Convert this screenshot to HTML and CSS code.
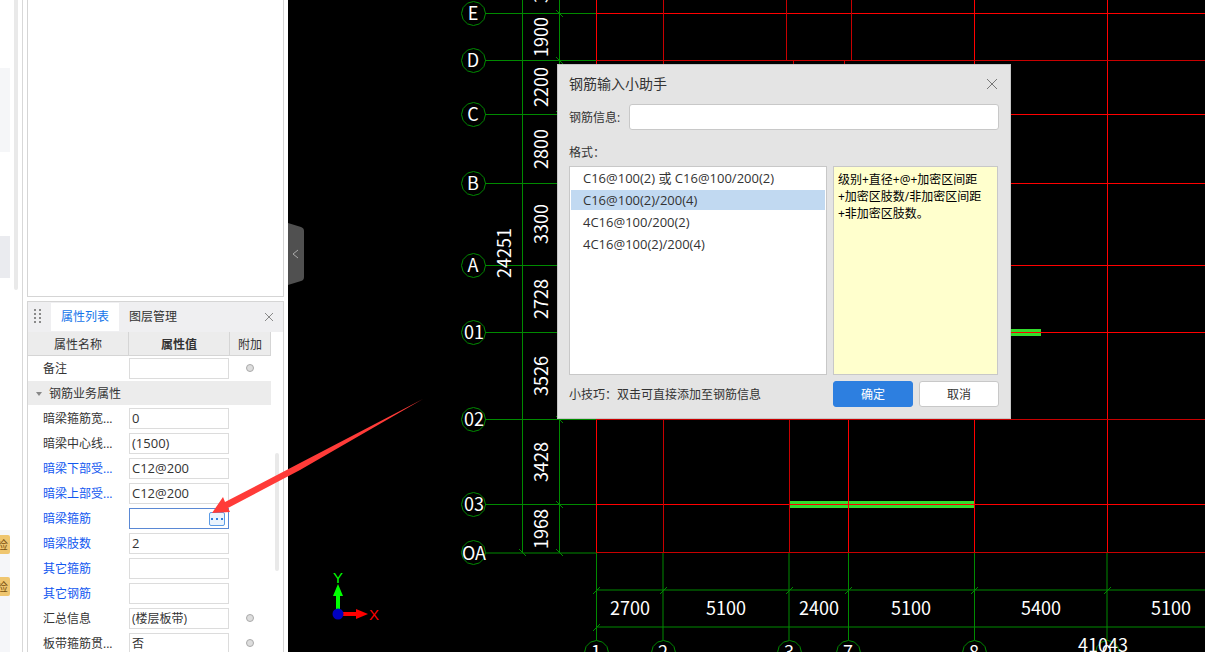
FILE: index.html
```html
<!DOCTYPE html>
<html lang="zh-CN">
<head>
<meta charset="utf-8">
<title>钢筋输入小助手</title>
<link rel="stylesheet" href="styles.css">
</head>
<body>
<div class="app">
  <aside class="rail">
    <div class="rail-list">
      <div class="rail-block"></div>
      <div class="rail-block rail-block-active"></div>
      <div class="rail-tags"><span class="tag">检</span><span class="tag">检</span></div>
    </div>
    <div class="rail-scroll"></div>
  </aside>

  <div class="side">
    <section class="tree-panel" aria-label="构件列表"></section>
    <section class="props">
      <header class="tabs">
        <svg class="grip" width="8" height="16" viewBox="0 0 8 16"><path d="M0 1h2M5 1h2M0 5h2M5 5h2M0 9h2M5 9h2M0 13h2M5 13h2" stroke="#8a8a8a" stroke-width="2"/></svg>
        <button class="tab tab-active" type="button">属性列表</button>
        <button class="tab" type="button">图层管理</button>
        <button class="icon-btn tabs-close" type="button" aria-label="关闭"><svg width="10" height="10" viewBox="0 0 10 10"><path d="M1 1l8 8M9 1l-8 8" stroke="#888" fill="none"/></svg></button>
      </header>
      <div class="props-body">
        <table class="prop-table">
          <colgroup><col class="col-name"><col class="col-value"><col class="col-extra"></colgroup>
          <thead><tr><th>属性名称</th><th class="strong">属性值</th><th>附加</th></tr></thead>
          <tbody>
            <tr><td><label for="p0">备注</label></td><td><div class="field"><input id="p0" type="text"></div></td><td class="extra"><input type="checkbox" aria-label="附加备注"></td></tr>
            <tr class="group"><td colspan="3"><span class="group-title"><svg width="6" height="4" viewBox="0 0 6 4"><path d="M0 0h6L3 4z" fill="#888"/></svg>钢筋业务属性</span></td></tr>
            <tr><td><label for="p1">暗梁箍筋宽...</label></td><td><div class="field"><input id="p1" type="text" value="0"></div></td><td></td></tr>
            <tr><td><label for="p2">暗梁中心线...</label></td><td><div class="field"><input id="p2" type="text" value="(1500)"></div></td><td></td></tr>
            <tr class="key"><td><label for="p3">暗梁下部受...</label></td><td><div class="field"><input id="p3" type="text" value="C12@200"></div></td><td></td></tr>
            <tr class="key"><td><label for="p4">暗梁上部受...</label></td><td><div class="field"><input id="p4" type="text" value="C12@200"></div></td><td></td></tr>
            <tr class="key"><td><label for="p5">暗梁箍筋</label></td><td><div class="field field-active"><input id="p5" type="text"><button class="more" type="button" aria-label="更多"><svg width="12" height="2" viewBox="0 0 12 2"><path d="M0 1h2M5 1h2M10 1h2" stroke="#2d7fe0" stroke-width="2"/></svg></button></div></td><td></td></tr>
            <tr class="key"><td><label for="p6">暗梁肢数</label></td><td><div class="field"><input id="p6" type="text" value="2"></div></td><td></td></tr>
            <tr class="key"><td><label for="p7">其它箍筋</label></td><td><div class="field"><input id="p7" type="text"></div></td><td></td></tr>
            <tr class="key"><td><label for="p8">其它钢筋</label></td><td><div class="field"><input id="p8" type="text"></div></td><td></td></tr>
            <tr><td><label for="p9">汇总信息</label></td><td><div class="field"><input id="p9" class="cjk" type="text" value="(楼层板带)"></div></td><td class="extra"><input type="checkbox" aria-label="附加汇总信息"></td></tr>
            <tr><td><label for="p10">板带箍筋贯...</label></td><td><div class="field"><input id="p10" class="cjk" type="text" value="否"></div></td><td class="extra"><input type="checkbox" aria-label="附加板带箍筋"></td></tr>
          </tbody>
        </table>
        <div class="props-scroll"></div>
      </div>
    </section>
  </div>

  <main class="canvas">
    <svg class="drawing" width="1632" height="900" viewBox="288 0 1632 900">
      <defs><polygon id="bubble" points="12,0 10.4,6 6,10.4 0,12 -6,10.4 -10.4,6 -12,0 -10.4,-6 -6,-10.4 0,-12 6,-10.4 10.4,-6"/></defs>
      <g fill="#33dd2c"><rect x="960" y="329" width="81" height="7"/><rect x="789" y="501" width="185" height="7"/></g>
      <g class="axis-green">
        <path d="M485 13.5H596M485 60.5H596M485 114.5H596M485 183.5H596M485 265.5H596M485 332.5H596M485 419.5H596M485 504.5H596M485 553H596"/>
        <path d="M522.5 0V553M559.5 0V553"/>
        <path d="M596.5 553V640M663 553V640M789 553V640M848.5 553V640M974.5 553V640M1107 553V640M596 590H1920M596 627H1920"/>
        <path d="M556 10l7 7M556 57l7 7M556 111l7 7M556 416l7 7M556 501l7 7M556 549l7 7M519 549l7 7M593 594l7-7M660 594l7-7M786 594l7-7M845 594l7-7M971 594l7-7M1104 594l7-7M593 631l7-7"/>
        <use href="#bubble" x="473.5" y="13.5"/><use href="#bubble" x="473.5" y="60.5"/><use href="#bubble" x="473.5" y="114.5"/><use href="#bubble" x="473.5" y="183.5"/><use href="#bubble" x="473.5" y="265.5"/><use href="#bubble" x="473.5" y="332.5"/><use href="#bubble" x="473.5" y="419.5"/><use href="#bubble" x="473.5" y="504.5"/><use href="#bubble" x="473.5" y="552.5"/>
        <use href="#bubble" x="596.5" y="652.5"/><use href="#bubble" x="663.5" y="652.5"/><use href="#bubble" x="789.5" y="652.5"/><use href="#bubble" x="848.5" y="652.5"/><use href="#bubble" x="974.5" y="652.5"/><use href="#bubble" x="1107.5" y="652.5"/>
      </g>
      <g class="axis-red">
        <path d="M596 13.5H1920M596 114.5H1920M596 183.5H1920M596 265.5H1920M596 332.5H1920M596 504.5H1920"/>
        <path d="M596.5 0V553M848.5 300V553M974.5 0V553M1107.5 0V553"/>
        <path class="dim" d="M596 60.5H1920M596 419.5H1920M596 552.5H1920M663.5 0V553M786.5 0V60M793.5 60V90M851.5 0V60M844.5 60V90M789.5 300V553"/>
      </g>
      <g class="cad-text">
        <text x="473" y="20">E</text><text x="473" y="67">D</text><text x="473" y="121">C</text><text x="473" y="190">B</text><text x="473" y="272">A</text><text x="474" y="339">01</text><text x="474" y="426">02</text><text x="474" y="511">03</text><text x="474" y="560">OA</text>
        <text transform="translate(548 -17) rotate(-90)">3002</text>
        <text transform="translate(548 37) rotate(-90)">1900</text>
        <text transform="translate(548 87) rotate(-90)">2200</text>
        <text transform="translate(548 149) rotate(-90)">2800</text>
        <text transform="translate(548 224) rotate(-90)">3300</text>
        <text transform="translate(548 299) rotate(-90)">2728</text>
        <text transform="translate(548 376) rotate(-90)">3526</text>
        <text transform="translate(548 462) rotate(-90)">3428</text>
        <text transform="translate(548 529) rotate(-90)">1968</text>
        <text transform="translate(511 253) rotate(-90)">24251</text>
        <text x="630" y="615">2700</text><text x="726" y="615">5100</text><text x="819" y="615">2400</text><text x="911" y="615">5100</text><text x="1041" y="615">5400</text><text x="1171" y="615">5100</text>
        <text x="596" y="659">1</text><text x="663" y="659">2</text><text x="789" y="659">3</text><text x="848" y="659">7</text><text x="974" y="659">8</text><text x="1107" y="659">9</text><text x="1103" y="652">41043</text>
      </g>
      <g class="ucs">
        <path d="M338 612V594" stroke="#0f0" stroke-width="4"/><path d="M338 584l5 12h-10z" fill="#0f0"/>
        <path d="M340 614H358" stroke="#f00" stroke-width="4"/><path d="M368 614l-12-5v10z" fill="#f00"/>
        <circle cx="338" cy="614" r="5.5" fill="#0000c0"/>
        <text x="338" y="583" fill="#0f0">Y</text><text x="374" y="620" fill="#f00">X</text>
      </g>
    </svg>

    <button class="collapse" type="button" aria-label="收起面板"><svg width="16" height="62" viewBox="0 0 16 62"><path d="M0 0L13 4Q16 5 16 8V54Q16 57 13 58L0 62z" fill="#505050"/><path d="M10 27l-5 4 5 4" fill="none" stroke="#aaa"/></svg></button>

    <section class="dialog" role="dialog" aria-labelledby="dlg-title">
      <header class="dialog-head"><h1 id="dlg-title">钢筋输入小助手</h1><button class="icon-btn" type="button" aria-label="关闭窗口"><svg width="12" height="12" viewBox="0 0 12 12"><path d="M1 1l10 10M11 1L1 11" stroke="#777" fill="none"/></svg></button></header>
      <div class="dialog-input"><label for="rebar">钢筋信息:</label><input id="rebar" type="text"></div>
      <p class="format-label">格式：</p>
      <div class="dialog-cols">
        <ul class="formats">
          <li>C16@100(2) 或 C16@100/200(2)</li>
          <li class="selected">C16@100(2)/200(4)</li>
          <li>4C16@100/200(2)</li>
          <li>4C16@100(2)/200(4)</li>
        </ul>
        <div class="note">级别+直径+@+加密区间距<br>+加密区肢数/非加密区间距<br>+非加密区肢数。</div>
      </div>
      <footer class="dialog-foot"><span>小技巧：双击可直接添加至钢筋信息</span><button class="btn btn-primary" type="button">确定</button><button class="btn" type="button">取消</button></footer>
    </section>
  </main>
</div>
<svg class="pointer" width="430" height="520" viewBox="0 0 430 520"><path d="M212 513L223 497L225 502L300 463L423 399L300 470L228 508L230 512z" fill="#ff3b38"/></svg>
</body>
</html>
```
FILE: styles.css
```css
* { box-sizing: border-box; }
body {
  margin: 0;
  font: 12px/16px "Open Sans", "Noto Sans CJK SC", sans-serif;
  color: #333;
  background: #fff;
}
button, input { font: inherit; color: inherit; margin: 0; padding: 0; border: 0; background: none; }
input { outline: 0; }
button { cursor: pointer; }
svg { display: block; }
.app { display: flex; height: 100vh; overflow: hidden; }

/* Left rail */
.rail { display: flex; gap: 4px; width: 23px; flex: none; border-right: 1px solid #d8d8d8; }
.rail-list { width: 10px; display: flex; flex-direction: column; padding-top: 68px; }
.rail-block { height: 84px; flex: none; background: #f5f6f8; }
.rail-block-active { height: 42px; margin: 84px 0 252px; background: #eaebef; }
.rail-tags { flex: 1; display: flex; flex-direction: column; gap: 23px; padding-top: 5px; background: #f5f6f9; }
.tag { display: flex; justify-content: flex-end; height: 19px; padding: 1px 2px 0 0; overflow: hidden; line-height: 19px; color: #7a5210; background: #efc670; border-radius: 0 2px 2px 0; }
.rail-scroll { width: 4px; height: 290px; background: #e9e9e9; border-radius: 0 0 2px 2px; }

/* Property column */
.side { width: 265px; flex: none; padding: 0 4px; display: flex; flex-direction: column; gap: 4px; }
.tree-panel { flex: 11 1 0; border: 1px solid #d5d5d5; border-top: 0; }
.props { flex: 13 1 0; min-height: 0; overflow: hidden; border: 1px solid #d5d5d5; border-bottom: 0; }
.tabs { display: flex; align-items: center; height: 30px; padding: 0 9px 1px 6px; background: #efeff1; }
.grip { margin-right: 9px; }
.tab { height: 28px; padding: 0 10px; }
.tab-active { color: #1474ea; background: #fff; }
.icon-btn { padding: 0; }
.tabs-close { margin-left: auto; }
.props-body { display: flex; justify-content: space-between; padding-right: 4px; }
.prop-table { width: 243px; border-collapse: separate; border-spacing: 0; table-layout: fixed; }
.col-name { width: 101px; }
.col-value { width: 101px; }
.prop-table th { height: 24px; padding: 2px 0 0; font-weight: 400; background: #ececec; border: 1px solid #d5d5d5; border-width: 0 1px 1px 0; }
.prop-table th.strong { font-weight: 700; }
.prop-table td { height: 25px; padding: 0; }
.prop-table td:first-child { padding-left: 15px; white-space: nowrap; }
.key { color: #1258f0; }
.prop-table .group td { padding: 2px 0 0 8px; background: #ececec; border-bottom: 1px solid #fff; }
.group-title { display: flex; align-items: center; gap: 7px; }
.field { display: flex; align-items: center; width: 100px; height: 21px; padding: 0 3px 0 2px; border: 1px solid #dcdcdc; color: #333; }
.field input { flex: 1; min-width: 0; width: 100%; height: 19px; padding-bottom: 1px; font-size: 13px; }
.field .cjk { font-size: 12px; }
.field-active { border-color: #5a88d4; }
.more { display: flex; align-items: center; justify-content: center; flex: none; width: 16px; height: 14px; border: 1px solid #5b9be6; border-radius: 2px; background: #eaf3fd; }
.prop-table .extra { padding: 0 2px 1px 0; }
.extra input { appearance: none; display: block; width: 8px; height: 8px; margin: 0 auto; border: 1px solid #aaa; border-radius: 50%; background: #ddd; }
.props-scroll { width: 4px; height: 118px; margin-top: 121px; border-radius: 2px; background: #e9e9e9; }

/* Drawing area */
.canvas { position: relative; flex: 1; min-width: 0; overflow: hidden; background: #000; }
.axis-green { fill: none; stroke: #008a00; }
.axis-red { fill: none; stroke: #f00; }
.axis-red .dim { stroke: #c80000; }
.cad-text { font: 18px "Noto Sans CJK SC", sans-serif; fill: #fff; text-anchor: middle; }
.ucs { font: 15px "Liberation Sans", sans-serif; text-anchor: middle; }
.collapse { position: absolute; left: 0; top: 223px; }

/* Input helper dialog */
.dialog { position: absolute; left: 269px; top: 64px; width: 454px; padding: 0 11px 11px; background: #e4e4e4; border: 1px solid #c6c6c6; }
.dialog-head { display: flex; align-items: center; justify-content: space-between; height: 39px; padding: 0 1px 2px 0; }
.dialog-head h1 { margin: 0; font-size: 14px; font-weight: 400; }
.dialog-input { display: flex; align-items: center; gap: 9px; }
.dialog-input label { padding-top: 2px; }
.dialog-input input { flex: 1; height: 26px; padding: 0 6px; background: #fff; border: 1px solid #c8c8c8; border-radius: 3px; }
.format-label { margin: 15px 0 5px; }
.dialog-cols { display: flex; gap: 6px; padding-right: 1px; }
.formats { flex: 1; height: 209px; margin: 0; padding: 1px; list-style: none; font-size: 13px; background: #fff; border: 1px solid #c8c8c8; }
.formats li { height: 20px; margin-bottom: 2px; padding-left: 12px; line-height: 20px; }
.formats .selected { background: #c1d9f1; }
.note { width: 165px; padding: 4px; line-height: 17px; color: #000; white-space: nowrap; background: #ffffcd; border: 1px solid #c8c8c8; }
.dialog-foot { display: flex; align-items: center; gap: 6px; margin-top: 6px; }
.dialog-foot span { flex: 1; padding-top: 2px; }
.btn { width: 80px; height: 26px; padding-top: 1px; background: #fff; border: 1px solid #c8c8c8; border-radius: 3px; }
.btn-primary { color: #fff; background: #2d7fe0; border-color: #2d7fe0; }

/* Annotation arrow */
.pointer { position: absolute; left: 0; top: 0; pointer-events: none; }
```
